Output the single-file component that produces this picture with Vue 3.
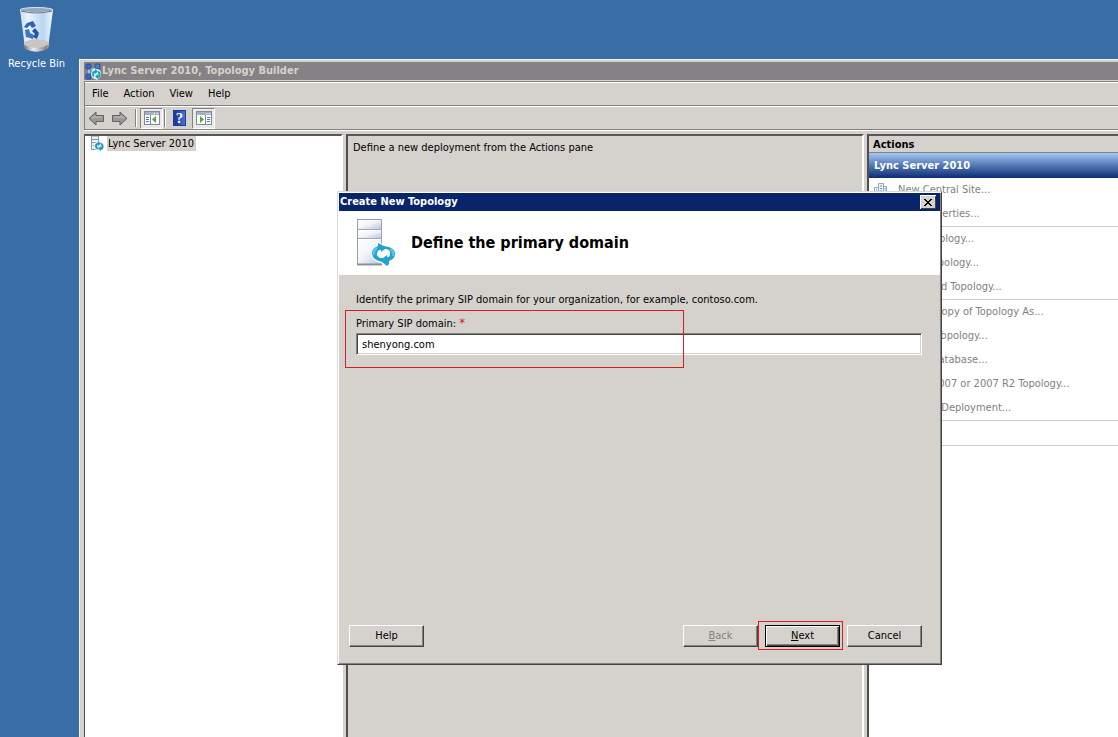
<script setup>
import { ref } from 'vue'

const menus = ['File', 'Action', 'View', 'Help']
const actionGroups = [
  ['New Central Site...', 'Edit Properties...'],
  ['New Topology...', 'Open Topology...', 'Download Topology...'],
  ['Save a Copy of Topology As...', 'Publish Topology...', 'Install Database...', 'Merge 2007 or 2007 R2 Topology...', 'Remove Deployment...'],
  ['Help'],
]
const domain = ref('shenyong.com')
</script>

<template>
  <main class="desktop">
    <a class="shortcut" href="#recycle">
      <svg width="40" height="48" viewBox="0 0 40 48" aria-hidden="true">
        <defs>
          <linearGradient id="bin" x1="0" x2="1" y1="0" y2="0">
            <stop offset="0" stop-color="#c6dcf2" />
            <stop offset=".25" stop-color="#e9f4ff" />
            <stop offset=".7" stop-color="#b9d5f0" />
            <stop offset="1" stop-color="#eef6fd" />
          </linearGradient>
          <linearGradient id="binbase" x1="0" x2="1" y1="0" y2="0">
            <stop offset="0" stop-color="#777" />
            <stop offset=".4" stop-color="#f2eeea" />
            <stop offset="1" stop-color="#77716d" />
          </linearGradient>
        </defs>
        <path d="M3 5 L8 43 Q20 50 31 43 L36 5 Z" fill="url(#bin)" />
        <path d="M7 37 Q20 31 32 37 L31 43 Q20 49 8 43 Z" fill="#c9c5c6" />
        <path d="M7 40 Q20 46 31 40 L30 44 Q20 49 8 44 Z" fill="url(#binbase)" />
        <ellipse cx="19.500" cy="5" rx="16.500" ry="2.500" fill="#8fa9bf" stroke="#e4e8ea" stroke-width="1" />
        <path d="M4 6 Q19 10 35 6" fill="none" stroke="#6c7680" stroke-width="1" />
        <path d="M10 18 L16 16 L19 21 L15 23 L13 20 L10 23 L7 22 Z" fill="#2f62b8" />
        <path d="M8 25 L12 24 L13 28 L17 30 L16 34 L9 32 Z" fill="#3a74cc" />
        <path d="M18 23 L22 28 L20 34 L16 32 L18 29 L15 26 Z" fill="#2456a8" />
      </svg>
      <span>Recycle Bin</span>
    </a>

    <section class="console" aria-label="Lync Server 2010, Topology Builder">
      <header class="caption">
        <svg width="17" height="17" viewBox="0 0 17 17" aria-hidden="true">
          <path d="M4 4 L8 7 L13 4 M4 4 V13" stroke="#9cc6f0" stroke-width="2" fill="none" />
          <rect x="1" y="1" width="5" height="5" rx="1" fill="#3c66c4" stroke="#274a9a" />
          <rect x="10" y="1" width="5" height="5" rx="1" fill="#4a7ad2" stroke="#274a9a" />
          <rect x="1" y="11" width="5" height="5" rx="1" fill="#3c66c4" stroke="#274a9a" />
          <path d="M9 5 L11 6 Q16 6 16 11 Q16 14 14 15 L12 17 L10 16 Q6 15 6 11 Q6 8 8 7 Z" fill="#d8f4fa" />
          <path d="M11 8.500 Q8 8.500 8 11 Q8 12.500 9 13 M12 14 Q15 14 14.500 11 Q14.500 9.500 13 9" fill="none" stroke="#18a0b8" stroke-width="2" />
          <path d="M10 6 L13 8.500 L10 11 Z M13 11 L10 13.500 L13 16 Z" fill="#18a0b8" />
        </svg>
        <h1>Lync Server 2010, Topology Builder</h1>
      </header>

      <nav class="menubar">
        <button v-for="m in menus" :key="m" type="button">{{ m }}</button>
      </nav>

      <div class="toolbar">
        <button type="button" class="arrow" aria-label="Back">
          <svg width="17" height="15" viewBox="0 0 17 15"><path d="M1 7.500 L8 1 V4.500 H15.500 V10.500 H8 V14 Z" fill="#999" stroke="#606060" /><path d="M4 7.500 L7 5 V6 H14" stroke="#c5c5c5" fill="none" /></svg>
        </button>
        <button type="button" class="arrow" aria-label="Forward">
          <svg width="17" height="15" viewBox="0 0 17 15"><path d="M16 7.500 L9 1 V4.500 H1.500 V10.500 H9 V14 Z" fill="#999" stroke="#606060" /><path d="M3 6 H10 V5 L13 7.500" stroke="#c5c5c5" fill="none" /></svg>
        </button>
        <i class="divider"></i>
        <button type="button" class="toggle" aria-label="Show console tree">
          <svg width="16" height="14" viewBox="0 0 16 14">
            <rect x=".5" y=".5" width="15" height="13" fill="#fff" stroke="#7a8ba2" />
            <rect x="1" y="1" width="14" height="3" fill="#a3b1c2" /><path d="M10 2.500 H11 M13 2.500 H14" stroke="#fff" />
            <path d="M6.500 4 V13" stroke="#7a8ba2" /><path d="M2 6.500 H5 M2 8.500 H5 M2 10.500 H5" stroke="#5877a0" />
            <path d="M12 5 V12 L8 8.500 Z" fill="#4aa83c" />
          </svg>
        </button>
        <i class="divider"></i>
        <button type="button" class="help" aria-label="Help">?</button>
        <button type="button" class="toggle" aria-label="Show action pane">
          <svg width="16" height="14" viewBox="0 0 16 14">
            <rect x=".5" y=".5" width="15" height="13" fill="#fff" stroke="#7a8ba2" />
            <rect x="1" y="1" width="14" height="3" fill="#a3b1c2" /><path d="M10 2.500 H11 M13 2.500 H14" stroke="#fff" />
            <path d="M9.500 4 V13" stroke="#7a8ba2" /><path d="M11 6.500 H14 M11 8.500 H14 M11 10.500 H14" stroke="#5877a0" />
            <path d="M4 5 V12 L8 8.500 Z" fill="#4aa83c" />
          </svg>
        </button>
      </div>

      <div class="panes">
        <div class="pane tree">
          <a class="node" href="#server">
            <svg width="15" height="16" viewBox="0 0 15 16" aria-hidden="true">
              <path d="M1.500 0 H8.500 V13.500 H1.500 Z" fill="#eef3fa" stroke="#8295ab" /><path d="M2 3.500 H8 M2 6.500 H8 M3 9.500 H6" stroke="#8295ab" />
              <path d="M6 4 L9 5 Q14 6 14 10 Q14 13 12 14 L10 16 L8 15 Q4 14 4 10 Q4 7 6 6 Z" fill="#def3f8" />
              <path d="M9 7.500 Q6 7.500 6 10 Q6 12 8 12.500 M10 13 Q13 13 12.500 10 Q12.500 8.500 11 8" fill="none" stroke="#2e9ab8" stroke-width="2" />
              <path d="M8 5 L11 7.500 L8 10 Z M11 10 L8 12.500 L11 15 Z" fill="#2e9ab8" />
            </svg>
            <span>Lync Server 2010</span>
          </a>
        </div>
        <div class="pane detail">Define a new deployment from the Actions pane</div>
        <aside class="pane actions">
          <h2>Actions</h2>
          <h3>Lync Server 2010</h3>
          <ul v-for="(g, gi) in actionGroups" :key="gi">
            <li v-for="(a, ai) in g" :key="a">
              <svg v-if="gi === 0 && ai === 0" width="13" height="14" viewBox="0 0 13 14" aria-hidden="true">
                <path d="M.5 4.500 H4.500 V13.500 H.5 Z M4.500 .5 H9.500 V13.500 H4.500 Z M9.500 3.500 H12.500 V13.500 H9.500 Z" fill="#eaf2f8" stroke="#8fa9be" />
                <path d="M6 3 H8 M6 5.500 H8 M6 8 H8 M2 7 H3 M10.500 6 H12" stroke="#6f94b4" />
              </svg>
              <i v-else></i>
              <button type="button">{{ a }}</button>
            </li>
          </ul>
        </aside>
      </div>
    </section>

    <section class="dialog" role="dialog" aria-labelledby="dialog-title">
      <header class="dialog-caption">
        <h2 id="dialog-title">Create New Topology</h2>
        <button type="button" aria-label="Close">
          <svg width="8" height="7" viewBox="0 0 8 7"><path d="M0 0 L7 7 M1 0 L8 7 M7 0 L0 7 M8 0 L1 7" stroke="#000" /></svg>
        </button>
      </header>
      <div class="banner">
        <svg width="41" height="48" viewBox="0 0 41 48" aria-hidden="true">
          <defs>
            <linearGradient id="case" x1="0" x2="1" y1="0" y2="1">
              <stop offset="0" stop-color="#fff" />
              <stop offset=".45" stop-color="#f3f5fa" />
              <stop offset="1" stop-color="#b8c6e0" />
            </linearGradient>
          </defs>
          <rect x="1.500" y=".5" width="24" height="45" fill="#fff" stroke="#9a9fa9" />
          <rect x="2" y="1" width="23" height="9" fill="url(#case)" />
          <rect x="2" y="12" width="23" height="7" fill="url(#case)" />
          <rect x="2" y="21" width="23" height="24" fill="url(#case)" />
          <path d="M1 10.500 H26 M1 19.500 H26" stroke="#a3a8b2" />
          <path d="M1 45.500 H26" stroke="#8a909c" stroke-width="2" />
          <path d="M21 22 L28 26 Q40 27 40 35 Q40 41 35 43 L34 46 L30 48 L25 44 Q15 42 15 34 Q15 29 20 27 Z" fill="#fff" />
          <path d="M22 24 L28 27 Q39 28 39 35 Q39 40 33 42 L33 45 L31 47 L26 43 Q16 41 16 34 Q16 29 22 27 Z" fill="#23a3cf" />
          <path d="M21 29 Q17 31 18 36 M34 30 Q38 32 37 37" fill="none" stroke="#57c8e8" stroke-width="2" />
          <path d="M23 31 L25 31 V33 L29 30 H31 Q35 32 34 35 Q34 38 32 38 H31 V36 L27 39 H25 Q21 38 21 35 Q21 32 23 31 Z" fill="#fff" />
        </svg>
        <h3>Define the primary domain</h3>
      </div>
      <form class="body" @submit.prevent>
        <p>Identify the primary SIP domain for your organization, for example, contoso.com.</p>
        <div class="field">
          <label for="sip">Primary SIP domain: <b>*</b></label>
          <input id="sip" v-model="domain" type="text" spellcheck="false" />
          <span class="mark field-mark"></span>
        </div>
        <footer>
          <button type="button" class="push">Help</button>
          <div class="steps">
            <button type="button" class="push" disabled><u>B</u>ack</button>
            <span class="next">
              <button type="submit" class="push default"><u>N</u>ext</button>
              <span class="mark next-mark"></span>
            </span>
            <button type="button" class="push">Cancel</button>
          </div>
        </footer>
      </form>
    </section>
  </main>
</template>

<style>
html, body { margin: 0; background: #386da6; }
</style>

<style scoped>
* { box-sizing: border-box; }
h1, h2, h3, p, ul { margin: 0; padding: 0; }
button { font: inherit; color: inherit; padding: 0; border: 0; background: none; }
svg { display: block; flex: none; }
.desktop {
  position: relative;
  height: 100vh;
  overflow: hidden;
  background: #386da6;
  color: #000;
  font: 11px/16px "DejaVu Sans Condensed", "DejaVu Sans", sans-serif;
}
.shortcut {
  position: absolute;
  left: 0;
  top: 5px;
  width: 73px;
  display: flex;
  flex-direction: column;
  align-items: center;
  gap: 3px;
  color: #fff;
  text-decoration: none;
}
.console {
  position: absolute;
  inset: 59px 0 0 79px;
  display: flex;
  flex-direction: column;
  padding: 2px 0 0 4px;
  border: solid #f4f4f4;
  border-width: 1px 0 0 1px;
  background: #d5d2cd;
}
.caption {
  display: flex;
  align-items: center;
  height: 18px;
  padding-left: 1px;
  background: #848284;
  color: #d5d2cd;
}
.caption h1 { font-size: 11px; line-height: 18px; }
.menubar, .toolbar {
  display: flex;
  align-items: center;
  border-left: 1px solid #84827e;
}
.menubar {
  height: 24px;
  margin-top: 1px;
  padding: 1px 0 0 7px;
  gap: 15px;
  border-top: 1px solid #84827e;
  box-shadow: inset 0 1px #fff;
}
.toolbar {
  height: 25px;
  border-top: 1px solid #84827e;
  border-bottom: 1px solid #84827e;
  box-shadow: inset 0 1px #fff, 0 1px #fff;
  padding: 1px 0 0 3px;
}
.arrow { width: 23px; height: 20px; display: flex; align-items: center; }
.divider { width: 2px; height: 18px; margin: 0 3px 0 1px; border-left: 1px solid #84827e; border-right: 1px solid #fff; }
.toggle {
  width: 23px;
  height: 21px;
  display: grid;
  place-items: center;
  border: 1px solid #84827e;
  border-right-color: #fff;
  border-bottom-color: #fff;
  background: #ebe9e6;
}
.help {
  width: 13px;
  height: 16px;
  margin: 0 6px 0 4px;
  border: 1px solid #1e3c9c;
  background: linear-gradient(90deg, #1c3c9e 0 2px, #4a72d8);
  color: #fff;
  font: bold 15px/14px "Liberation Serif", serif;
}
.panes { flex: 1; min-height: 0; display: flex; gap: 3px; padding-top: 4px; }
.pane {
  border: 2px solid #504e4c;
  border-bottom: 0;
  border-right-color: #fff;
  border-top-color: #5a5856;
}
.tree { width: 259px; border-left-width: 1px; background: #fff; }
.node { display: flex; gap: 2px; padding-left: 5px; color: #000; text-decoration: none; }
.node span { padding: 0 2px 0 1px; height: 15px; line-height: 15px; background: #d5d2cd; }
.detail { flex: 1; min-width: 0; padding: 4px 5px; }
.actions { width: 251px; background: #fff; border-right: 0; }
.actions h2 {
  height: 17px;
  padding-left: 4px;
  border-bottom: 1px solid #84827e;
  background: #d5d2cd;
  font-size: 11px;
  line-height: 17px;
}
.actions h3 {
  height: 25px;
  padding-left: 5px;
  background: linear-gradient(#a4c6ee, #6a8fc8 35%, #0c2c74);
  color: #fff;
  font-size: 11px;
  line-height: 26px;
}
.actions ul { list-style: none; border-bottom: 1px solid #ccc; }
.actions li { display: flex; align-items: center; height: 24px; padding-left: 5px; gap: 11px; color: #7f7f7f; }
.actions li i { width: 13px; }
.dialog {
  position: absolute;
  left: 337px;
  top: 191px;
  width: 605px;
  display: flex;
  flex-direction: column;
  padding: 1px;
  border: 1px solid #dcdad6;
  border-right-color: #444;
  border-bottom-color: #444;
  background: #d5d2cd;
  box-shadow: inset 1px 1px #fff, inset -1px -1px #84827e;
}
.dialog-caption {
  display: flex;
  align-items: center;
  justify-content: space-between;
  height: 18px;
  padding: 0 4px 0 1px;
  background: #08246b;
  color: #fff;
}
.dialog-caption h2 { font-size: 11px; line-height: 18px; }
.dialog-caption button {
  width: 16px;
  height: 14px;
  display: grid;
  place-items: center;
  background: #d5d2cd;
  box-shadow: inset 1px 1px #fff, inset -1px -1px #444;
}
.banner { display: flex; align-items: center; gap: 14px; height: 64px; padding-left: 17px; background: #fff; }
.banner h3 { font-size: 16px; line-height: 20px; }
.body { padding: 17px 18px 16px 17px; }
.field { position: relative; display: flex; flex-direction: column; gap: 1px; margin-top: 8px; }
.field b { color: #e01818; font-size: 13px; line-height: 12px; font-weight: normal; }
.field input {
  height: 22px;
  width: 100%;
  padding: 0 5px;
  border: 1px solid #fff;
  border-top-color: #84827e;
  border-left-color: #84827e;
  box-shadow: inset 1px 1px #444, inset -1px -1px #d5d2cd;
  background: #fff;
  color: #000;
  font: inherit;
  outline: 0;
}
.mark { position: absolute; border: 1px solid #dc1c1c; pointer-events: none; }
.field-mark { left: -11px; top: -6px; width: 339px; height: 58px; }
footer { display: flex; justify-content: space-between; margin: 270px 0 0 -7px; }
.steps { display: flex; gap: 7px; }
.push {
  width: 75px;
  height: 22px;
  line-height: 20px;
  border: 1px solid #fff;
  border-right-color: #444;
  border-bottom-color: #444;
  box-shadow: inset -1px -1px #84827e;
  background: #d5d2cd;
}
.push:disabled { color: #84827e; }
.default { border-color: #000; box-shadow: inset 1px 1px #fff, inset -1px -1px #444, inset -2px -2px #84827e; }
.next { position: relative; display: flex; }
.next-mark { inset: -4px -3px -3px -7px; }
</style>
